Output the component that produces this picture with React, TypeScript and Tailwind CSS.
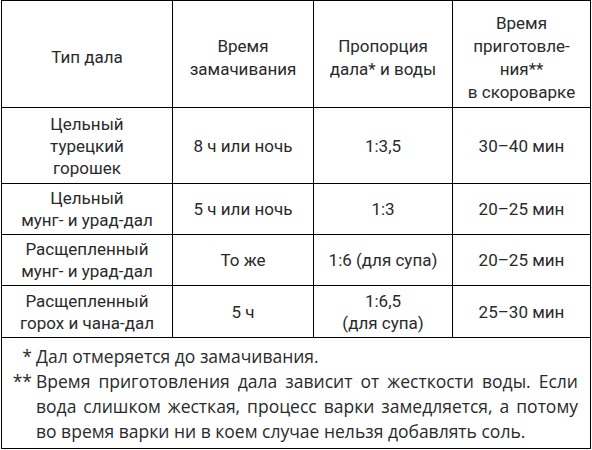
import React from "react";

const cell = "flex items-center justify-center text-center border-r border-b border-black";

export default function App() {
  const rows: { h: string; c: React.ReactNode[] }[] = [
    {
      h: "h-[76px]",
      c: [
        <>Цельный<br />турецкий<br />горошек</>,
        <>8 ч или ночь</>,
        <>1:3,5</>,
        <>30–40 мин</>,
      ],
    },
    {
      h: "h-[51px]",
      c: [
        <>Цельный<br />мунг- и урад-дал</>,
        <>5 ч или ночь</>,
        <>1:3</>,
        <>20–25 мин</>,
      ],
    },
    {
      h: "h-[51px]",
      c: [
        <>Расщепленный<br />мунг- и урад-дал</>,
        <>То же</>,
        <>1:6 (для супа)</>,
        <>20–25 мин</>,
      ],
    },
    {
      h: "h-[52px]",
      c: [
        <>Расщепленный<br />горох и чана-дал</>,
        <>5 ч</>,
        <>1:6,5<br />(для супа)</>,
        <>25–30 мин</>,
      ],
    },
  ];

  return (
    <div className="w-[592px] h-[450px] bg-white overflow-hidden text-[#2a2a2a] text-[17px] leading-[23px] font-['Roboto',sans-serif]">
      <div className="ml-[1px] w-[590px] border-l border-t border-black">
        <div className="grid grid-cols-[171px_141px_139px_138px]">
          <div className={`${cell} h-[107px] pt-[7px]`}>Тип дала</div>
          <div className={`${cell} h-[107px] pt-[7px]`}>
            Время<br />замачивания
          </div>
          <div className={`${cell} h-[107px] pt-[7px]`}>
            Пропорция<br />дала* и воды
          </div>
          <div className={`${cell} h-[107px] pt-[7px]`}>
            Время<br />приготовле-<br />ния**<br />в скороварке
          </div>
          {rows.map((r, i) =>
            r.c.map((c, j) => (
              <div key={`${i}-${j}`} className={`${cell} ${r.h} leading-[22px]`}>
                <div>{c}</div>
              </div>
            ))
          )}
        </div>
        <div className="h-[111px] border-r border-b border-black pt-[6px] pr-[12px] leading-[25px] text-[17.5px] font-['Open_Sans',sans-serif]">
          <div className="flex">
            <div className="w-[34px] text-right pr-[4px] shrink-0">*</div>
            <div>Дал отмеряется до замачивания.</div>
          </div>
          <div className="flex">
            <div className="w-[34px] text-right pr-[4px] shrink-0">**</div>
            <div className="flex-1">
              <div className="text-justify [text-align-last:justify]">
                Время приготовления дала зависит от жесткости воды. Если
              </div>
              <div className="text-justify [text-align-last:justify]">
                вода слишком жесткая, процесс варки замедляется, а потому
              </div>
              <div>во время варки ни в коем случае нельзя добавлять соль.</div>
            </div>
          </div>
        </div>
      </div>
    </div>
  );
}
